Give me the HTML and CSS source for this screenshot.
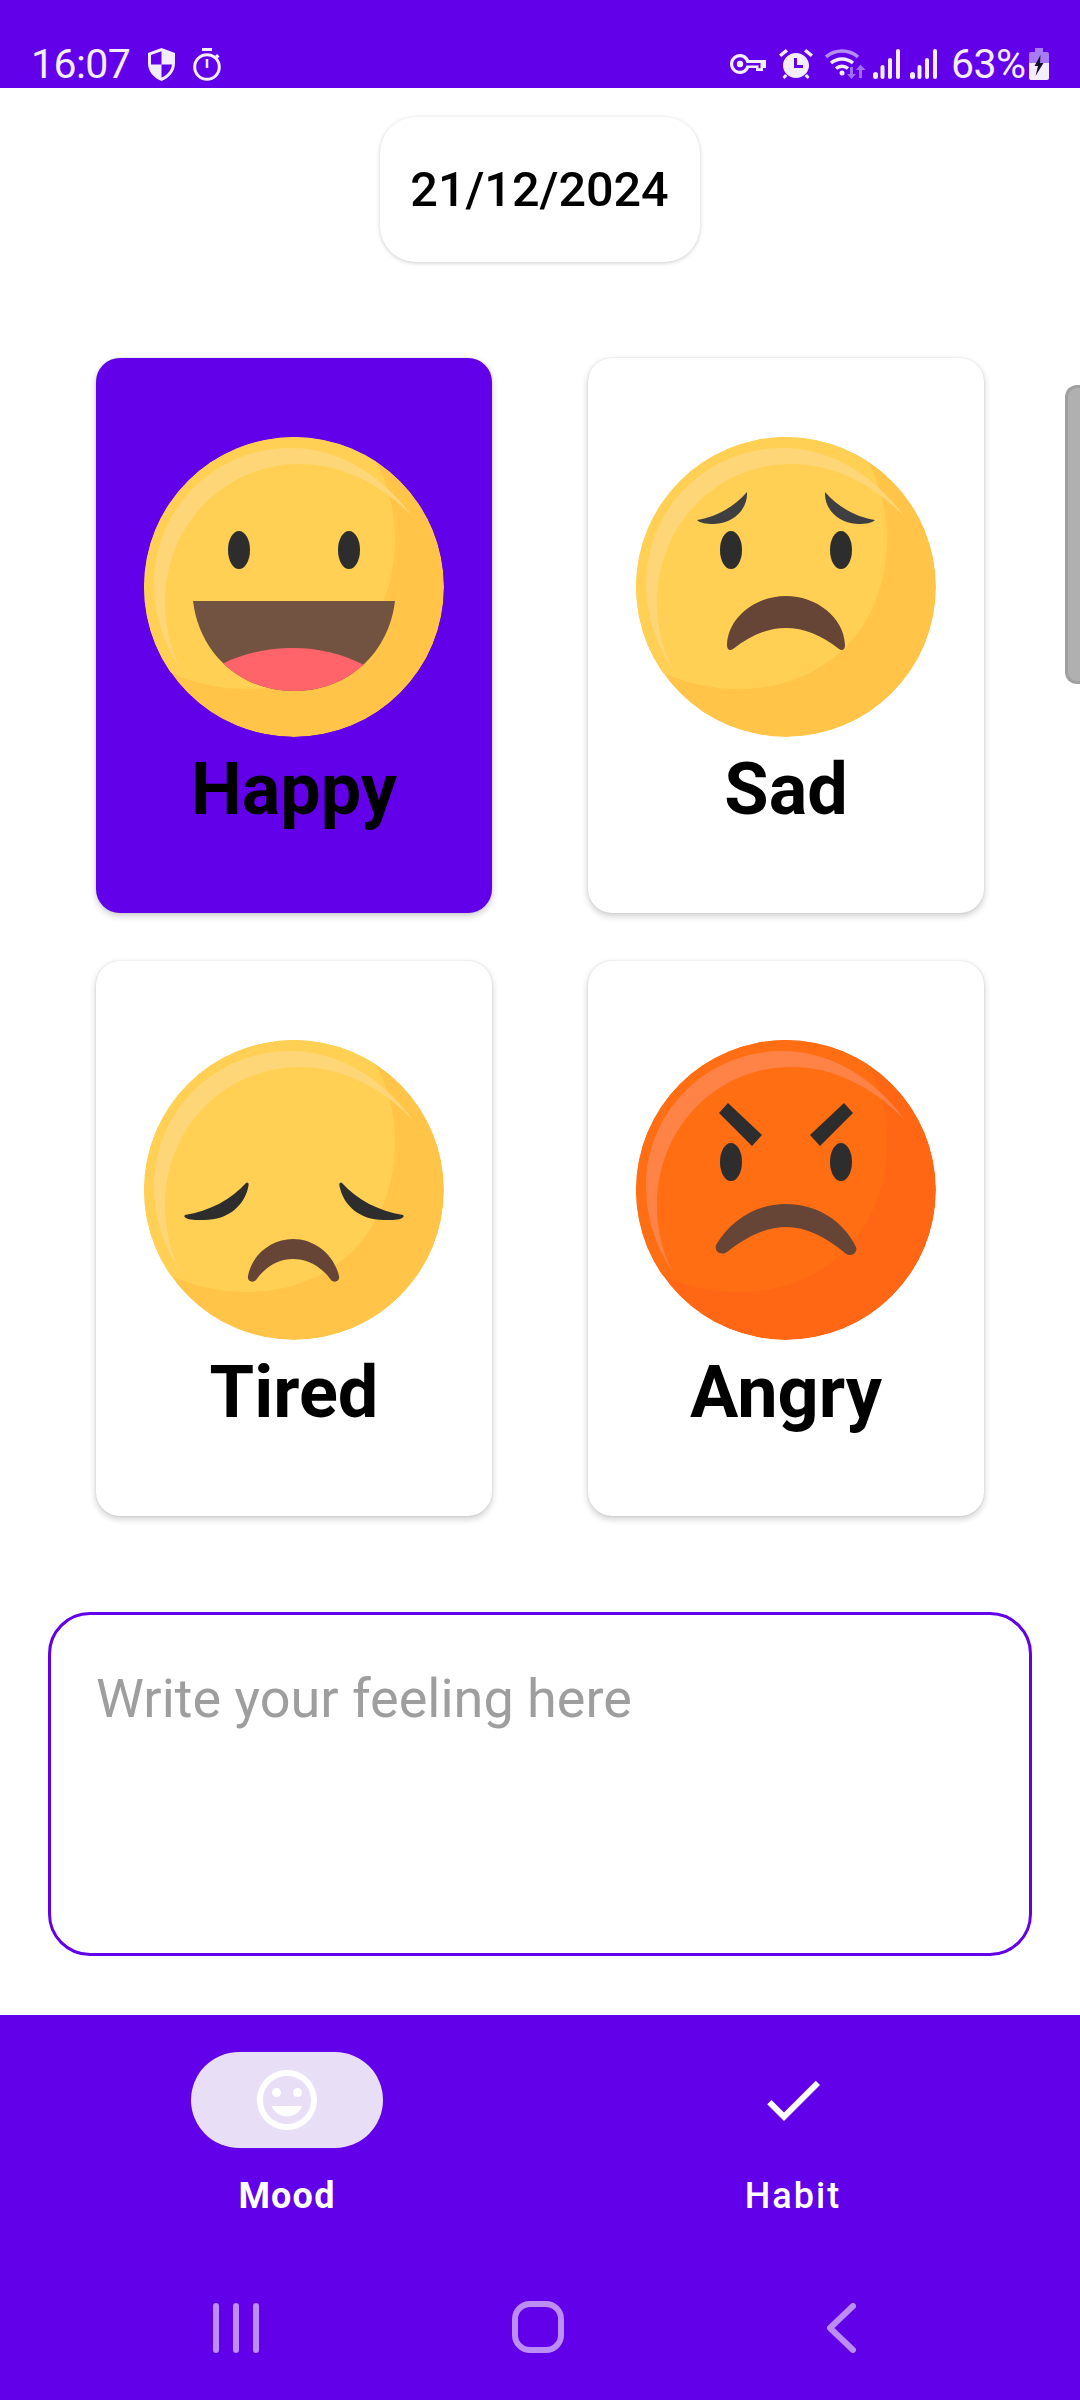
FILE: index.html
```html
<!DOCTYPE html>
<html>
<head>
<meta charset="utf-8">
<title>Mood</title>
<link rel="stylesheet" href="styles.css">
</head>
<body>

<!-- shared emoji artwork, 300 x 300, cut to the circle by .emoji -->
<svg class="defs" width="0" height="0">
	<defs>
		<path id="face-light" d="M231 23C246 50 251 78 251 102C251 190 190 252 103 252C75 252 50 246 27 236H0V0H231Z"/>
		<path id="face-shine" d="M38 234C18 205 10 175 10 147C10 70 72 11 146 11C195 11 238 38 269 80C235 45 195 27 156 27C80 27 21 88 21 166C21 190 27 215 38 234Z"/>
		<clipPath id="mouth-clip"><path d="M49 164H251C245 215 205 254 150 254C95 254 55 215 49 164Z"/></clipPath>
	</defs>
</svg>

<div class="page">

	<div class="statusbar">
		<span class="clock">16:07</span>
		<svg class="ico-shield" viewBox="0 0 27 33"><path fill-rule="evenodd" d="M13.5 0L27 5V15C27 24 21 30 13.5 33C6 30 0 24 0 15V5ZM13.5 3.2L3 7V16.5H13.5ZM13.5 16.5V29.6C19 27.3 23 23 24 16.5Z"/></svg>
		<svg class="ico-timer" viewBox="0 0 28 33"><path d="M9 0H19V3H9Z"/><path d="M24 6L26.500 8.500L24.500 10.500L22 8Z"/><path d="M12.700 11H15.300V20H12.700Z"/><circle class="ring" cx="14" cy="19" r="12.300"/></svg>
		<div class="status-right">
			<svg class="ico-key" viewBox="0 0 36 20"><path fill-rule="evenodd" d="M10 0C14 0 17.500 2.300 19 6H36V14H33V17H26V14H19C17.500 17.700 14 20 10 20C4.500 20 0 15.500 0 10C0 4.500 4.500 0 10 0ZM10 3.200C6.200 3.200 3.200 6.200 3.200 10C3.200 13.800 6.200 16.800 10 16.800C13 16.800 15.500 14.800 16.500 11.500H28.500V14.300H30.500V9H16.500C15.500 5.200 13 3.200 10 3.200ZM10 6.800A3.200 3.200 0 1 1 10 13.200A3.200 3.200 0 1 1 10 6.800Z"/></svg>
			<svg class="ico-alarm" viewBox="0 0 34 30"><path fill-rule="evenodd" d="M17 4C24.200 4 30 9.600 30 16.500C30 23.400 24.200 29 17 29C9.800 29 4 23.400 4 16.500C4 9.600 9.800 4 17 4ZM15 9V19H24V16H18V9Z"/><path d="M6.800 0L9 2.500L2.200 8L0 5.500Z"/><path d="M27.200 0L25 2.500L31.800 8L34 5.500Z"/><path d="M6 25L8.500 27L5.500 30L3.500 28Z"/><path d="M28 25L25.500 27L28.500 30L30.500 28Z"/></svg>
			<svg class="ico-wifi" viewBox="0 0 41 30"><g class="wifi-lines"><path class="dim" d="M1 8C10 0 24 0 33 8"/><path d="M6 14C12.500 8.500 21.500 8.500 28 14"/><path d="M11 19.500C14.500 16.500 19.500 16.500 23 19.500"/></g><circle class="dot" cx="17" cy="24" r="2.500"/><path class="arrow" d="M25 18H28V25H31L26.500 30L22 25H25Z"/><path class="arrow" d="M34 29H37V21H40.500L35.500 15.500L31 21H34Z"/></svg>
			<svg class="ico-signal" viewBox="0 0 27 30"><path d="M0 25.500a2.500 2.500 0 0 1 5 0v2a2.500 2.500 0 0 1-5 0Z"/><rect x="7.500" y="16" width="4" height="14" rx="2"/><rect x="15" y="9" width="4" height="21" rx="2"/><rect x="23" y="0" width="4" height="30" rx="2"/></svg>
			<svg class="ico-signal sig-two" viewBox="0 0 27 30"><path d="M0 25.500a2.500 2.500 0 0 1 5 0v2a2.500 2.500 0 0 1-5 0Z"/><rect x="7.500" y="16" width="4" height="14" rx="2"/><rect x="15" y="9" width="4" height="21" rx="2"/><rect x="23" y="0" width="4" height="30" rx="2"/></svg>
			<span class="battery-pct">63%</span>
			<svg class="ico-battery" viewBox="0 0 20 32"><path class="batt-empty" d="M6 0H14V4H18Q20 4 20 6V15H0V6Q0 4 2 4H6Z"/><path d="M0 15H20V30Q20 32 18 32H2Q0 32 0 30Z"/><path class="bolt" d="M11.500 7L5.500 18H9L6.500 28L14.500 15H11Z"/></svg>
		</div>
	</div>

	<div class="content">
		<div class="date-pill">21/12/2024</div>

		<div class="mood-grid">
			<div class="mood-card selected">
				<svg class="emoji" viewBox="0 0 300 300">
					<circle class="yl-base" cx="150" cy="150" r="150"/>
					<use class="yl-light" href="#face-light"/>
					<use class="yl-shine" href="#face-shine"/>
					<ellipse class="eye" cx="95" cy="113" rx="11" ry="19"/>
					<ellipse class="eye" cx="205" cy="113" rx="11" ry="19"/>
					<path class="mouth-open" d="M49 164H251C245 215 205 254 150 254C95 254 55 215 49 164Z"/>
					<path class="tongue" clip-path="url(#mouth-clip)" d="M60 240L80 226C100 216 125 211 149 211C175 211 198 217 218 227L240 240V270H60Z"/>
				</svg>
				<div class="mood-label">Happy</div>
			</div>

			<div class="mood-card">
				<svg class="emoji" viewBox="0 0 300 300">
					<circle class="yl-base" cx="150" cy="150" r="150"/>
					<use class="yl-light" href="#face-light"/>
					<use class="yl-shine" href="#face-shine"/>
					<path class="brow-soft" d="M61 83C80 80 98 70 111 55C112 70 100 86 78 87C70 87 64 86 61 83Z"/>
					<path class="brow-soft" d="M239 83C220 80 202 70 189 55C188 70 200 86 222 87C230 87 236 86 239 83Z"/>
					<ellipse class="eye" cx="95" cy="113" rx="11" ry="19"/>
					<ellipse class="eye" cx="205" cy="113" rx="11" ry="19"/>
					<path class="mouth" d="M91 208C92 180 120 159 150 159C180 159 208 180 209 208C209 213 206 214 203 212C185 198 168 191 150 191C132 191 115 198 97 212C94 214 91 213 91 208Z"/>
				</svg>
				<div class="mood-label">Sad</div>
			</div>

			<div class="mood-card">
				<svg class="emoji" viewBox="0 0 300 300">
					<circle class="yl-base" cx="150" cy="150" r="150"/>
					<use class="yl-light" href="#face-light"/>
					<use class="yl-shine" href="#face-shine"/>
					<path class="eye" d="M41 175C65 171 87 160 102 143C105 141 105 145 104 148C100 165 85 180 60 180C52 180 45 180 42 178C40 177 40 176 41 175Z"/>
					<path class="eye" d="M259 175C235 171 213 160 198 143C195 141 195 145 196 148C200 165 215 180 240 180C248 180 255 180 258 178C260 177 260 176 259 175Z"/>
					<path class="mouth" d="M104 236C108 214 128 199 149 199C170 199 190 214 195 236C196 242 190 243 187 240C177 226 163 219 149 219C135 219 122 226 112 240C109 243 103 242 104 236Z"/>
				</svg>
				<div class="mood-label">Tired</div>
			</div>

			<div class="mood-card">
				<svg class="emoji" viewBox="0 0 300 300">
					<circle class="or-base" cx="150" cy="150" r="150"/>
					<use class="or-light" href="#face-light"/>
					<use class="or-shine" href="#face-shine"/>
					<path class="eye" d="M92 63L126 95L116 106L83 73Z"/>
					<path class="eye" d="M208 63L174 95L184 106L217 73Z"/>
					<ellipse class="eye" cx="95" cy="122" rx="11" ry="19"/>
					<ellipse class="eye" cx="205" cy="122" rx="11" ry="19"/>
					<path class="mouth" d="M80 205C95 180 120 164 150 164C180 164 207 180 220 207C222 213 215 218 209 213C190 197 170 187 150 187C130 187 110 197 91 212C85 216 78 212 80 205Z"/>
				</svg>
				<div class="mood-label">Angry</div>
			</div>
		</div>

		<div class="note-box">Write your feeling here</div>

		<!-- the grey handle lying over the right edge -->
		<div class="side-handle"></div>
	</div>

	<div class="tabbar">
		<div class="tab">
			<div class="tab-icon active">
				<svg viewBox="0 0 24 24"><path d="M11.990 2C6.470 2 2 6.480 2 12s4.470 10 9.990 10C17.520 22 22 17.520 22 12S17.520 2 11.990 2zM12 20c-4.420 0-8-3.580-8-8s3.580-8 8-8 8 3.580 8 8-3.580 8-8 8zm3.500-9c.83 0 1.500-.67 1.500-1.500S16.330 8 15.500 8 14 8.670 14 9.500s.67 1.500 1.500 1.500zm-7 0c.83 0 1.500-.67 1.500-1.500S9.330 8 8.500 8 7 8.670 7 9.500 7.670 11 8.500 11zm3.500 6.500c2.330 0 4.310-1.460 5.110-3.500H6.890c.8 2.040 2.780 3.500 5.110 3.500z"/></svg>
			</div>
			<div class="tab-label bold">Mood</div>
		</div>
		<div class="tab">
			<div class="tab-icon">
				<svg viewBox="0 0 24 24"><path d="M9 16.170L4.830 12l-1.420 1.410L9 19 21 7l-1.410-1.410z"/></svg>
			</div>
			<div class="tab-label wide">Habit</div>
		</div>
	</div>

	<div class="navbar">
		<svg class="nav-recent" viewBox="0 0 46 50"><rect x="0" y="0" width="6" height="50" rx="3"/><rect x="20" y="0" width="6" height="50" rx="3"/><rect x="40" y="0" width="6" height="50" rx="3"/></svg>
		<svg class="nav-home" viewBox="0 0 52 52"><rect x="3" y="3" width="46" height="46" rx="15"/></svg>
		<svg class="nav-back" viewBox="0 0 30 50"><path d="M27 3L4 25L27 47"/></svg>
	</div>

</div>
</body>
</html>
```

FILE: styles.css
```css
* {
	box-sizing: border-box;
}
html, body {
	margin: 0;
	padding: 0;
}
body {
	background-color: #fff;
	font-family: Roboto, "Liberation Sans", sans-serif;
}
.defs {
	position: absolute;
}
.page {
	width: 1080px;
	height: 2400px;
	display: flex;
	flex-direction: column;
	overflow: hidden;
}

/* status bar */
.statusbar {
	height: 88px;
	flex: none;
	background-color: #6200ea;
	padding: 46px 31px 6px 31px;
	display: flex;
	align-items: center;
	color: #f3edfd;
	font-size: 41px;
	letter-spacing: -0.6px;
	line-height: 36px;
}
.statusbar svg {
	flex: none;
	fill: #f3edfd;
}
.clock {
	width: 97px;
	white-space: nowrap;
}
.ico-shield {
	width: 27px;
	height: 33px;
	margin-left: 20px;
}
.ico-timer {
	width: 28px;
	height: 33px;
	margin-left: 18px;
}
.ico-timer .ring {
	fill: none;
	stroke: #f3edfd;
	stroke-width: 3;
}
.status-right {
	margin-left: auto;
	display: flex;
	align-items: center;
}
.ico-key {
	width: 36px;
	height: 20px;
}
.ico-alarm {
	width: 34px;
	height: 30px;
	margin-left: 13px;
}
.ico-wifi {
	width: 41px;
	height: 30px;
	margin-left: 12px;
}
.ico-wifi .wifi-lines {
	fill: none;
	stroke: #f3edfd;
	stroke-width: 3.5;
}
.ico-wifi .wifi-lines .dim {
	stroke: #b48df3;
}
.ico-wifi .dot {
	fill: #f3edfd;
}
.ico-wifi .arrow {
	fill: #a06ef0;
}
.ico-signal {
	width: 27px;
	height: 30px;
	margin-left: 7px;
}
.sig-two {
	margin-left: 10px;
}
.battery-pct {
	width: 71px;
	margin-left: 14px;
	white-space: nowrap;
}
.ico-battery {
	width: 20px;
	height: 32px;
	margin-left: 7px;
}
.statusbar .batt-empty {
	fill: #a77bf3;
}
.statusbar .bolt {
	fill: #1b1030;
}

/* main area */
.content {
	flex: 1;
	position: relative;
	padding: 29px 48px 0;
	display: flex;
	flex-direction: column;
}
.date-pill {
	align-self: center;
	width: 320px;
	height: 145px;
	margin-left: -1px;
	border-radius: 36px;
	background-color: #fff;
	box-shadow: 0 1px 4px rgba(0, 0, 0, 0.2);
	font-size: 48.5px;
	font-weight: 500;
	color: #000;
	display: flex;
	align-items: center;
	justify-content: center;
}
.mood-grid {
	margin-top: 96px;
	padding: 0 48px;
	display: grid;
	grid-template-columns: 396px 396px;
	grid-auto-rows: 555px;
	column-gap: 96px;
	row-gap: 48px;
}
.mood-card {
	background-color: #fff;
	border-radius: 24px;
	box-shadow: 0 3px 7px rgba(0, 0, 0, 0.2), 0 0 2px rgba(0, 0, 0, 0.12);
	padding-top: 79px;
	display: flex;
	flex-direction: column;
	align-items: center;
}
.mood-card.selected {
	background-color: #6200ea;
}
.emoji {
	width: 300px;
	height: 300px;
	flex: none;
	clip-path: circle(50%);
}
.mood-label {
	margin-top: 11px;
	font-size: 72px;
	line-height: 84px;
	font-weight: 700;
	color: #000;
}

/* emoji colours */
.yl-base { fill: #ffc448; }
.yl-light { fill: #ffd054; }
.yl-shine { fill: #ffd677; }
.or-base { fill: #ff6715; }
.or-light { fill: #ff6e12; }
.or-shine { fill: #ff8347; }
.eye { fill: #2d2d2d; }
.brow-soft { fill: #3f3f42; }
.mouth { fill: #664536; }
.mouth-open { fill: #725240; }
.tongue { fill: #ff646b; }

.note-box {
	margin-top: 96px;
	height: 344px;
	border: 3px solid #6200ea;
	border-radius: 42px;
	padding: 52px 45px;
	font-size: 54px;
	line-height: 63px;
	color: #9e9e9e;
}
.side-handle {
	position: absolute;
	right: 0;
	top: 297px;
	width: 15px;
	height: 299px;
	background-color: #b0b0b0;
	border: 3px solid #a0a0a0;
	border-right: 0;
	border-radius: 12px 0 0 12px;
}

/* bottom tabs */
.tabbar {
	height: 235px;
	flex: none;
	background-color: #6200ea;
	padding-top: 37px;
	padding-left: 95px;
	display: flex;
	gap: 122px;
}
.tab {
	width: 384px;
	display: flex;
	flex-direction: column;
	align-items: center;
}
.tab-icon {
	width: 192px;
	height: 96px;
	border-radius: 48px;
	display: flex;
	align-items: center;
	justify-content: center;
}
.tab-icon.active {
	background-color: #e8dff7;
}
.tab-icon svg {
	width: 72px;
	height: 72px;
	fill: #fff;
}
.tab-label {
	margin-top: 27px;
	font-size: 36px;
	line-height: 42px;
	font-weight: 500;
	letter-spacing: 1.5px;
	color: #fff;
}
.tab-label.bold {
	font-weight: 700;
	letter-spacing: 1.2px;
}
.tab-label.wide {
	letter-spacing: 2px;
}

/* system navigation */
.navbar {
	height: 150px;
	flex: none;
	background-color: #6200ea;
	display: flex;
	align-items: flex-start;
	padding: 53px 0 0 213px;
}
.navbar svg {
	flex: none;
}
.nav-recent {
	width: 46px;
	height: 50px;
	fill: #bb8df5;
}
.nav-home {
	width: 52px;
	height: 52px;
	margin-left: 253px;
	margin-top: -2px;
	fill: none;
	stroke: #bb8df5;
	stroke-width: 6;
}
.nav-back {
	width: 30px;
	height: 50px;
	margin-left: 262px;
	fill: none;
	stroke: #bb8df5;
	stroke-width: 6;
	stroke-linecap: round;
	stroke-linejoin: round;
}
```
